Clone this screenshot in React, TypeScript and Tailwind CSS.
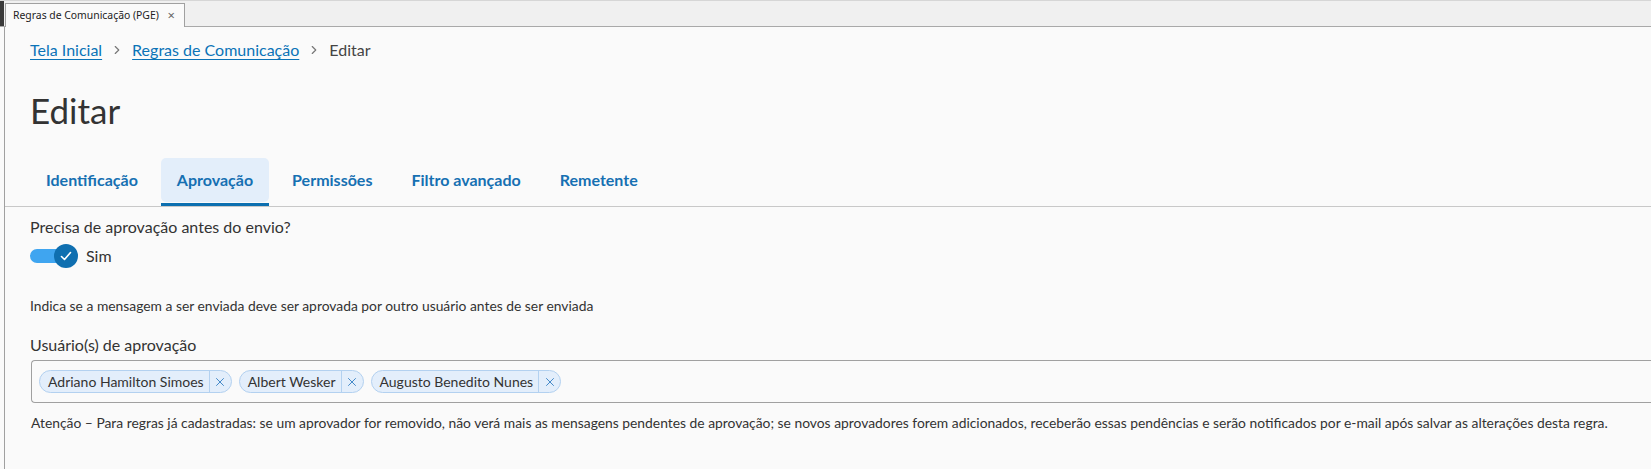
import { ChevronRight, X } from "lucide-react";

const tabs = ["Identificação", "Aprovação", "Permissões", "Filtro avançado", "Remetente"];
const approvers = ["Adriano Hamilton Simoes", "Albert Wesker", "Augusto Benedito Nunes"];

function Chip({ name }: { name: string }) {
  return (
    <div className="flex h-[23px] items-center rounded-full border border-[#b3d1f0] bg-[#e3eefb] text-[14px] text-[#333]">
      <span className="pl-[8px] pr-[5px] leading-none">{name}</span>
      <span className="flex h-full w-[22px] items-center justify-center border-l border-[#b3d1f0] text-[#2f7cc1]">
        <X size={14} strokeWidth={1.5} />
      </span>
    </div>
  );
}

export default function App() {
  return (
    <div className="h-[469px] w-full overflow-hidden bg-[#fafafa] font-['Lato',sans-serif] text-[#333]">
      {/* WINDOW TAB STRIP */}
      <div className="flex h-[27px] border-t border-[#d6d6d6] border-b border-b-[#a9a9a9] bg-[#f0f0f0]">
        <div className="h-[25px] w-[4px] bg-[#3a3a3a]"></div>
        <div className="relative z-10 mt-[2px] -mb-px ml-[1px] flex h-[24px] w-[180px] items-center justify-between border border-b-0 border-[#a0a0a0] bg-[#fafafa] pl-[7px] pr-[9px] font-['Noto_Sans',sans-serif] text-[10.4px] text-[#222]">
          <span>Regras de Comunicação (PGE)</span>
          <span className="text-[13px] text-[#666]">×</span>
        </div>
      </div>

      {/* BODY */}
      <div className="ml-[4px] h-full border-l border-[#a0a0a0]">
        {/* BREADCRUMB */}
        <div className="flex items-center gap-2 pl-[25px] pt-[11px] text-[16px] leading-[24px]">
          <a className="text-[#0b73b7] underline underline-offset-[3px]">Tela Inicial</a>
          <ChevronRight size={14} className="text-[#777]" />
          <a className="text-[#0b73b7] underline underline-offset-[3px]">Regras de Comunicação</a>
          <ChevronRight size={14} className="text-[#777]" />
          <span className="text-[#444]">Editar</span>
        </div>

        {/* TITLE */}
        <h1 className="mt-[26px] pl-[25px] text-[35px] leading-[44px] text-[#333]">Editar</h1>

        {/* TABS */}
        <div className="mt-[26px] flex gap-[7px] border-b border-[#c8c8c8] pl-[25px]">
          {tabs.map((t) => {
            const active = t === "Aprovação";
            return (
              <div key={t} className="flex flex-col">
                <div
                  className={
                    active
                      ? "flex h-[44px] items-center rounded-[5px] bg-[#e3eefa] px-4 text-[16px] font-bold text-[#1670b2]"
                      : "flex h-[44px] items-center rounded-[5px] px-4 text-[16px] font-bold text-[#1670b2]"
                  }
                >
                  {t}
                </div>
                <div className={active ? "mt-[1px] h-[3px] bg-[#0c6fb0]" : "mt-[1px] h-[3px]"}></div>
              </div>
            );
          })}
        </div>

        {/* FORM */}
        <div className="pl-[25px]">
          <div className="mt-[9px] text-[16px] leading-[22px]">Precisa de aprovação antes do envio?</div>
          <div className="mt-[6px] flex h-[24px] items-center">
            <div className="flex items-center">
              <div className="h-[14px] w-[36px] rounded-l-full bg-[#3fa5f0]"></div>
              <div className="-ml-[12px] flex h-[24px] w-[24px] items-center justify-center rounded-full bg-[#0f6fb0]">
                <svg width="14" height="14" viewBox="0 0 14 14" fill="none">
                  <polyline points="2.5,7.5 5.5,10.5 11.5,3.5" stroke="white" strokeWidth="1.6" strokeLinecap="round" strokeLinejoin="round" />
                </svg>
              </div>
            </div>
            <span className="ml-[8px] text-[16px]">Sim</span>
          </div>

          <div className="mt-[29px] text-[13.85px] leading-[18px]">
            Indica se a mensagem a ser enviada deve ser aprovada por outro usuário antes de ser enviada
          </div>

          <div className="mt-[19px] text-[16px] leading-[22px]">Usuário(s) de aprovação</div>
          <div className="mt-[4px] ml-[1px] flex h-[43px] items-center gap-[7px] rounded-l-[4px] border border-r-0 border-[#a0a0a0] pl-[7px]">
            {approvers.map((a) => (
              <Chip key={a} name={a} />
            ))}
          </div>

          <div className="mt-[11px] ml-[1px] text-[13.85px] leading-[18px]">
            Atenção – Para regras já cadastradas: se um aprovador for removido, não verá mais as mensagens pendentes de aprovação; se novos aprovadores forem adicionados, receberão essas pendências e serão notificados por e-mail após salvar as alterações desta regra.
          </div>
        </div>
      </div>
    </div>
  );
}
